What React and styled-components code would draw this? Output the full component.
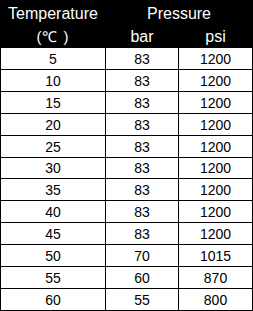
import React from 'react';
import styled, { createGlobalStyle } from 'styled-components';

const GlobalStyle = createGlobalStyle`
  html, body {
    margin: 0;
    padding: 0;
    background: #fff;
  }
`;

const Table = styled.div`
  display: grid;
  grid-template-columns: 104px 72px 73px;
  grid-template-rows: 23px 23px repeat(5, 21px) 20px repeat(6, 21px);
  gap: 1px;
  width: 253px;
  box-sizing: border-box;
  padding: 0 1px 1px 1px;
  background: #000;
  font-family: "Liberation Sans", Arial, sans-serif;
`;

const HeadCell = styled.div`
  display: flex;
  align-items: flex-end;
  justify-content: center;
  grid-column: ${(p) => p.$span || 'auto'};
  padding-bottom: ${(p) => (p.$second ? '1px' : '0')};
  background: #000;
  color: #fff;
  font-size: 16px;
  line-height: 18px;
`;

const Unit = styled.span`
  font-size: 15px;
  letter-spacing: 1px;
  white-space: pre;
`;

const Cell = styled.div`
  display: flex;
  align-items: center;
  justify-content: center;
  background: #fff;
  color: #000;
  font-size: 14px;
  line-height: 16px;
`;

const rows = [
  [5, 83, 1200],
  [10, 83, 1200],
  [15, 83, 1200],
  [20, 83, 1200],
  [25, 83, 1200],
  [30, 83, 1200],
  [35, 83, 1200],
  [40, 83, 1200],
  [45, 83, 1200],
  [50, 70, 1015],
  [55, 60, 870],
  [60, 55, 800],
];

const App = () => {
  return (
    <>
      <GlobalStyle />
      <Table>
        <HeadCell>Temperature</HeadCell>
        <HeadCell $span="2 / 4">Pressure</HeadCell>
        <HeadCell $second>
          <Unit>(℃ )</Unit>
        </HeadCell>
        <HeadCell $second>bar</HeadCell>
        <HeadCell $second>psi</HeadCell>
        {rows.map(([temp, bar, psi]) => (
          <React.Fragment key={temp}>
            <Cell>{temp}</Cell>
            <Cell>{bar}</Cell>
            <Cell>{psi}</Cell>
          </React.Fragment>
        ))}
      </Table>
    </>
  );
};

export default App;
